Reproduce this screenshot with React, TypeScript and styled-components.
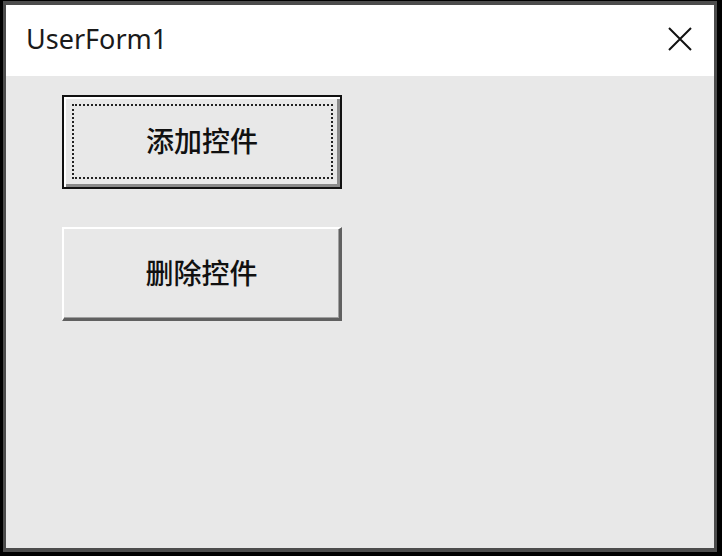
import React from "react";
import styled, { createGlobalStyle } from "styled-components";

const GlobalStyle = createGlobalStyle`
  html, body {
    margin: 0;
    padding: 0;
    background: #000;
  }
  * {
    box-sizing: border-box;
  }
`;

// Styled Components
const Frame = styled.div`
  width: 722px;
  height: 556px;
  padding: 1px 5px 4px 3px;
  background: #000;
`;

const Window = styled.div`
  display: flex;
  flex-direction: column;
  height: 100%;
  border-style: solid;
  border-color: #4c4c4c;
  border-width: 4px 3px 4px 3px;
  background: #e8e8e8;
`;

const TitleBar = styled.div`
  display: flex;
  align-items: center;
  justify-content: space-between;
  height: 71px;
  padding: 0 20px 4px 20px;
  background: #fff;
`;

const Title = styled.span`
  font-family: "Segoe UI", "Noto Sans", "Open Sans", sans-serif;
  font-size: 27px;
  color: #1a1a1a;
`;

const CloseButton = styled.div`
  display: flex;
  align-items: center;
  justify-content: center;
  width: 28px;
  height: 28px;
`;

const Body = styled.div`
  flex: 1;
  display: flex;
  flex-direction: column;
  align-items: flex-start;
  gap: 38px;
  padding: 19px 0 0 56px;
`;

const Button = styled.button<{ $focused?: boolean }>`
  position: relative;
  width: 280px;
  height: 94px;
  padding: 0 0 4px 0;
  display: flex;
  align-items: center;
  justify-content: center;
  background: #e8e8e8;
  font-family: "Noto Sans CJK SC", sans-serif;
  font-size: 28px;
  font-weight: 500;
  color: #111;
  cursor: default;
  border-style: solid;
  border-width: ${(p) => (p.$focused ? "2px" : "2px 3px 3px 2px")};
  border-color: ${(p) =>
    p.$focused ? "#111" : "#ffffff #606060 #606060 #ffffff"};
  box-shadow: ${(p) =>
    p.$focused
      ? "inset 2px 2px 0 #ffffff, inset -3px -3px 0 #8a8a8a"
      : "inset -1px -1px 0 #a0a0a0"};
`;

const FocusRing = styled.span`
  position: absolute;
  inset: 7px 7px 8px 8px;
  border: 2px dotted #222;
  pointer-events: none;
`;

const Label = styled.span`
  position: relative;
`;

const App: React.FC = () => {
  return (
    <Frame>
      <GlobalStyle />
      <Window>
        <TitleBar>
          <Title>UserForm1</Title>
          <CloseButton>
            <svg width="24" height="24" viewBox="0 0 24 24">
              <path
                d="M1 1 L23 23 M23 1 L1 23"
                stroke="#111"
                strokeWidth="2"
                fill="none"
              />
            </svg>
          </CloseButton>
        </TitleBar>
        <Body>
          <Button $focused>
            <FocusRing />
            <Label>添加控件</Label>
          </Button>
          <Button>
            <Label>删除控件</Label>
          </Button>
        </Body>
      </Window>
    </Frame>
  );
};

export default App;
